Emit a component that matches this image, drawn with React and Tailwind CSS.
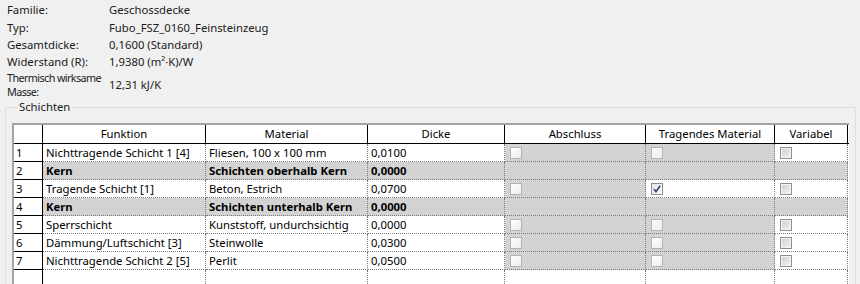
import React from 'react';

const rows = [
  { n: 1, f: 'Nichttragende Schicht 1 [4]', m: 'Fliesen, 100 x 100 mm', d: '0,0100' },
  { n: 2, f: 'Kern', m: 'Schichten oberhalb Kern', d: '0,0000', core: true },
  { n: 3, f: 'Tragende Schicht [1]', m: 'Beton, Estrich', d: '0,0700', tragend: true },
  { n: 4, f: 'Kern', m: 'Schichten unterhalb Kern', d: '0,0000', core: true },
  { n: 5, f: 'Sperrschicht', m: 'Kunststoff, undurchsichtig', d: '0,0000' },
  { n: 6, f: 'Dämmung/Luftschicht [3]', m: 'Steinwolle', d: '0,0300' },
  { n: 7, f: 'Nichttragende Schicht 2 [5]', m: 'Perlit', d: '0,0500' },
];

const info = [
  ['Familie:', 'Geschossdecke', 'h-[19px]'],
  ['Typ:', 'Fubo_FSZ_0160_Feinsteinzeug', 'h-[17px]'],
  ['Gesamtdicke:', '0,1600 (Standard)', 'h-[17px]'],
  ['Widerstand (R):', '1,9380 (m²·K)/W', 'h-[18px]'],
];

// grauer, deaktivierter Kasten (Abschluss / Tragendes Material)
const BoxOff = () => (
  <span className="block w-[12px] h-[12px] border border-[#b3b3b3] bg-linear-to-br from-white to-[#ededed]" />
);

// Variabel-Kasten
const BoxVar = () => (
  <span className="block w-[12px] h-[12px] border border-[#8f8f8f] p-[1px] bg-[#f4f4f4]">
    <span className="block w-full h-full bg-linear-to-br from-[#d2d2d2] to-[#f0f0f0]" />
  </span>
);

const BoxChecked = () => (
  <span className="block w-[12px] h-[12px] border border-[#8f8f8f] bg-linear-to-br from-[#e4e4e4] to-[#fafafa] relative">
    <svg viewBox="0 0 10 10" className="absolute inset-0 w-[10px] h-[10px]">
      <path d="M2 5.2 L4 7.6 L8.2 1.8" fill="none" stroke="#2f3f7c" strokeWidth="1.6" />
    </svg>
  </span>
);

const cell = 'h-full border-r border-dotted border-[#7a7a7a] flex items-center pl-[3px] shrink-0 whitespace-nowrap overflow-hidden';

const App = () => {
  return (
    <div className="w-[860px] h-[284px] overflow-hidden bg-[#f0f0f0] text-[11.3px] text-[#1b1b1b] font-['Noto_Sans',sans-serif] leading-none">
      <div className="pl-[7px]">
        {info.map(([l, v, h]) => (
          <div key={l} className={`flex items-center whitespace-nowrap ${h}`}>
            <div className="w-[102px] shrink-0">{l}</div>
            <div>{v}</div>
          </div>
        ))}
        <div className="flex items-center h-[28px] whitespace-nowrap">
          <div className="w-[102px] shrink-0 leading-[14px] text-[10.8px] tracking-[-0.6px]">Thermisch wirksame<br />Masse:</div>
          <div>12,31 kJ/K</div>
        </div>
      </div>

      <fieldset className="ml-[5px] mt-[1px] w-[851px] h-[200px] border border-[#d5dfe5] rounded-[3px] px-[6px] pt-[9px]">
        <legend className="ml-[5px] px-[2px] leading-[14px]">Schichten</legend>

        <div className="w-[837px] bg-white border-t-2 border-l-2 border-[#a3a3a3] text-black">
          {/* Kopfzeile */}
          <div className="flex h-[19px] border-b border-black">
            <div className="w-[29px] h-full border-r border-black shrink-0" />
            {[
              ['Funktion', 'w-[163px]'],
              ['Material', 'w-[162px]'],
              ['Dicke', 'w-[137px]'],
              ['Abschluss', 'w-[141px]'],
              ['Tragendes Material', 'w-[129px]'],
              ['Variabel', 'w-[73px]'],
            ].map(([t, w]) => (
              <div key={t} className={`${w} h-full border-r border-black flex items-center justify-center shrink-0`}>{t}</div>
            ))}
          </div>

          {rows.map((r) => {
            const grey = r.core ? 'bg-[#d3d3d3]' : 'bg-white';
            return (
              <div key={r.n} className={`flex h-[18px] ${r.core ? 'font-bold' : ''}`}>
                <div className="w-[29px] h-full border-r border-b border-black bg-white flex items-center pl-[2px] font-normal shrink-0">{r.n}</div>
                <div className={`w-[163px] ${cell} ${grey} border-b`}>{r.f}</div>
                <div className={`w-[162px] ${cell} ${grey} border-b`}>{r.m}</div>
                <div className={`w-[137px] ${cell} ${grey} border-b`}>{r.d}</div>
                <div className={`w-[141px] ${cell} bg-[#d3d3d3] border-b pl-[5px]`}>{!r.core && <BoxOff />}</div>
                <div className={`w-[129px] ${cell} ${r.tragend ? 'bg-white' : 'bg-[#d3d3d3]'} border-b pl-[5px]`}>
                  {r.tragend ? <BoxChecked /> : !r.core && <BoxOff />}
                </div>
                <div className={`w-[73px] ${cell} ${r.core ? 'bg-[#d3d3d3]' : 'bg-white'} border-b pl-[5px]`}>{!r.core && <BoxVar />}</div>
              </div>
            );
          })}

          {/* leere Zeile */}
          <div className="flex h-[18px]">
            <div className="w-[29px] h-full border-r border-black shrink-0" />
            <div className={`w-[163px] ${cell}`} />
            <div className={`w-[162px] ${cell}`} />
            <div className={`w-[137px] ${cell}`} />
            <div className={`w-[141px] ${cell}`} />
            <div className={`w-[129px] ${cell}`} />
            <div className={`w-[73px] ${cell}`} />
          </div>
        </div>
      </fieldset>
    </div>
  );
};

export default App;
